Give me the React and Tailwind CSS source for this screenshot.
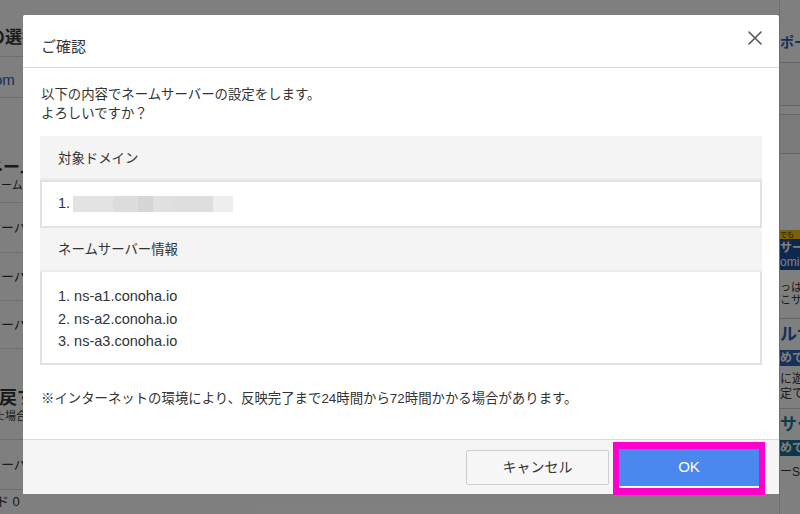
import React from "react";

const font = { fontFamily: '"Liberation Sans", "Noto Sans CJK JP", sans-serif' };

function Background() {
  return (
    <div className="flex w-[800px] h-[514px] bg-white text-[#333]">
      {/* main column (only its right edge part peeks out at left) */}
      <div className="flex-1 flex flex-col overflow-hidden">
        <div className="h-[57px] shrink-0 flex items-end pb-[6px] border-b border-[#ddd]">
          <span className="-ml-[12px] text-[17px] font-bold whitespace-nowrap">の選択</span>
        </div>
        <div className="h-[41px] shrink-0 flex items-end pb-[6px] border-b border-[#ddd]">
          <span className="-ml-[6px] text-[15px] text-[#2b5fb3] whitespace-nowrap">om</span>
        </div>
        <div className="h-[50px] shrink-0" />
        <div className="h-[55px] shrink-0 flex flex-col justify-center border-b border-[#ddd]">
          <span className="-ml-[14px] text-[17px] font-bold leading-[20px] whitespace-nowrap">ネーム</span>
          <span className="-ml-[10px] text-[11px] leading-[14px] whitespace-nowrap">ネームサーバー</span>
        </div>
        <div className="h-[50px] shrink-0 flex items-center border-b border-[#ddd]">
          <span className="-ml-[12px] text-[13px] whitespace-nowrap">サーバー</span>
        </div>
        <div className="h-[48px] shrink-0 flex items-center border-b border-[#ddd]">
          <span className="-ml-[12px] text-[13px] whitespace-nowrap">サーバー</span>
        </div>
        <div className="h-[48px] shrink-0 flex items-center border-b border-[#ddd]">
          <span className="-ml-[12px] text-[13px] whitespace-nowrap">サーバー</span>
        </div>
        <div className="h-[38px] shrink-0" />
        <div className="h-[53px] shrink-0 flex flex-col justify-start border-b border-[#ddd]">
          <span className="-ml-[1px] text-[18px] font-bold leading-[22px] whitespace-nowrap">戻す</span>
          <span className="-ml-[6px] text-[11px] leading-[14px] whitespace-nowrap">た場合</span>
        </div>
        <div className="h-[50px] shrink-0 flex items-center border-b border-[#ddd]">
          <span className="-ml-[12px] text-[13px] whitespace-nowrap">サーバー</span>
        </div>
        <div className="h-[24px] shrink-0 flex items-center">
          <span className="-ml-[4px] text-[13px] whitespace-nowrap">ド 0</span>
        </div>
      </div>
      {/* right sidebar */}
      <div className="w-[21px] shrink-0 overflow-hidden flex flex-col border-l border-[#ddd]">
        <div className="h-[22px] shrink-0" />
        <div className="h-[40px] shrink-0 flex items-center">
          <span className="text-[14px] font-bold text-[#2b5fb3] whitespace-nowrap">ポータル</span>
        </div>
        <div className="h-[44px] shrink-0 border-y border-[#ccc] bg-[#f5f5f5]" />
        <div className="h-[8px] shrink-0" />
        <div className="h-[40px] shrink-0 border-y border-[#ccc] bg-[#f5f5f5]" />
        <div className="h-[76px] shrink-0" />
        <div className="h-[9px] shrink-0 bg-[#f4c20d] text-[7px] leading-[9px] whitespace-nowrap text-[#333]">でも</div>
        <div className="h-[31px] shrink-0 bg-[#1d4f9c] text-white flex flex-col justify-center">
          <span className="text-[12px] leading-[14px] font-bold whitespace-nowrap">サーバ</span>
          <span className="text-[12px] leading-[14px] whitespace-nowrap">omi</span>
        </div>
        <div className="h-[48px] shrink-0 flex flex-col justify-center">
          <span className="text-[11px] leading-[13px] whitespace-nowrap">っは</span>
          <span className="text-[11px] leading-[13px] whitespace-nowrap">こサー</span>
        </div>
        <div className="h-[32px] shrink-0 border-t border-[#ccc] flex items-center">
          <span className="text-[17px] font-bold text-[#2b5fb3] whitespace-nowrap">ルサ</span>
        </div>
        <div className="h-[16px] shrink-0 bg-[#2c64b4] text-white text-[12px] leading-[16px] font-bold whitespace-nowrap">めて</div>
        <div className="h-[42px] shrink-0 flex flex-col justify-center">
          <span className="text-[12px] leading-[15px] whitespace-nowrap">に遊</span>
          <span className="text-[12px] leading-[15px] whitespace-nowrap">定て</span>
        </div>
        <div className="h-[32px] shrink-0 border-t border-[#ccc] flex items-center">
          <span className="text-[17px] font-bold text-[#1d7a9c] whitespace-nowrap">サー</span>
        </div>
        <div className="h-[16px] shrink-0 bg-[#1d6f8f] text-white text-[12px] leading-[16px] font-bold whitespace-nowrap">めて</div>
        <div className="h-[32px] shrink-0 flex items-center">
          <span className="text-[12px] whitespace-nowrap">ーSI</span>
        </div>
      </div>
    </div>
  );
}

function CloseIcon() {
  return (
    <svg width="16" height="16" viewBox="0 0 16 16" fill="none" stroke="#555" strokeWidth="1.6" strokeLinecap="round">
      <path d="M2 2 L14 14 M14 2 L2 14" />
    </svg>
  );
}

function Modal() {
  return (
    <div className="absolute left-[23px] top-[15px] w-[756px] h-[479px] bg-white flex flex-col rounded-[2px]">
      <div className="h-[53px] shrink-0 flex items-center justify-between border-b border-[#d9d9d9] pl-[18px] pr-[16px] pt-[12px]">
        <span className="text-[15px] text-[#333]">ご確認</span>
        <span className="-mt-[18px]">
          <CloseIcon />
        </span>
      </div>
      <div className="flex-1 flex flex-col px-[17px] pt-[17px] text-[13.4px] text-[#333]">
        <p className="leading-[19px] pl-[1px]">
          以下の内容でネームサーバーの設定をします。
          <br />
          よろしいですか？
        </p>
        <div className="mt-[13px] flex flex-col">
          <div className="h-[44px] bg-[#f4f4f4] flex items-center pl-[18px] pt-[4px] border-b-2 border-[#ececec]">
            対象ドメイン
          </div>
          <div className="h-[48px] border-2 border-[#e2e2e2] flex items-center pl-[16px] gap-[3px] text-[14.5px]">
            <span>1.</span>
            <div className="flex h-[16px] w-[160px]">
              <div className="w-[40px] bg-[#e3e3e3]" />
              <div className="w-[25px] bg-[#dcdcdc]" />
              <div className="w-[15px] bg-[#d6d6d6]" />
              <div className="w-[20px] bg-[#e0e0e0]" />
              <div className="w-[40px] bg-[#dedede]" />
              <div className="w-[20px] bg-[#eeeeee]" />
            </div>
          </div>
          <div className="h-[44px] bg-[#f4f4f4] flex items-center pl-[18px] pt-[3px] border-b-2 border-[#ececec]">
            ネームサーバー情報
          </div>
          <div className="h-[93px] border-2 border-t-0 border-[#e2e2e2] flex flex-col pl-[16px] pt-[13px] leading-[22.5px] text-[14.5px]">
            <span>1. ns-a1.conoha.io</span>
            <span>2. ns-a2.conoha.io</span>
            <span>3. ns-a3.conoha.io</span>
          </div>
        </div>
        <p className="mt-[24px] pl-[1px] leading-[19px]">
          ※インターネットの環境により、反映完了まで24時間から72時間かかる場合があります。
        </p>
      </div>
      <div className="h-[55px] shrink-0 bg-[#f5f5f5] border-t border-[#dcdcdc] flex justify-end items-start pt-[9px] pr-[20px] gap-[10px]">
        <button className="w-[143px] h-[35px] mt-[1px] bg-[#f7f7f7] border border-[#cfcfcf] rounded-[2px] text-[14px] text-[#333]">
          キャンセル
        </button>
        <div className="relative">
          <button className="w-[140px] h-[39px] bg-[#4a87ee] border-b-2 border-white text-[15px] text-white">
            OK
          </button>
          <div className="absolute -left-[6px] -right-[6px] -top-[7px] -bottom-[7px] border-x-[6px] border-t-[7px] border-b-[7px] border-[#ff00cc] pointer-events-none" />
        </div>
      </div>
    </div>
  );
}

export default function App() {
  return (
    <div className="relative w-[800px] h-[514px] overflow-hidden" style={font}>
      <Background />
      <div className="absolute inset-0 bg-black/50" />
      <Modal />
    </div>
  );
}
